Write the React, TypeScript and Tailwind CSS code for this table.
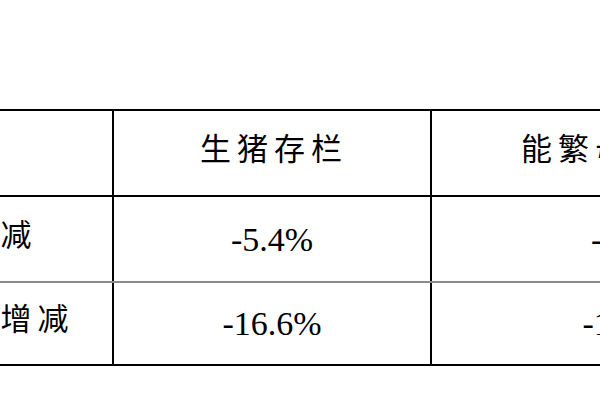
import React from "react";

const cjk = "font-['Noto_Sans_CJK_SC',sans-serif] text-[31px] tracking-[6px] pb-[12px]";
const num = "font-['Liberation_Serif',serif] text-[34px]";

const rows = [
  { label: "比上月增减", pig: "-5.4%", sow: "-4.5%", line: "border-b-2 border-[#8a8a8a]" },
  { label: "比上年同期增减", pig: "-16.6%", sow: "-13.2%", line: "border-b-2 border-black" },
];

export default function App() {
  return (
    <div className="w-[600px] h-[400px] overflow-hidden bg-white text-black">
      <div className="pt-[109px] -ml-[222px] w-[1054px]">
        <div className="border-t-2 border-black">
          <div className="grid grid-cols-[336px_318px_400px] h-[86px] border-b-2 border-black">
            <div className="border-r-2 border-black" />
            <div className={`border-r-2 border-black flex items-center justify-center pl-[4px] ${cjk}`}>生猪存栏</div>
            <div className={`flex items-center justify-center ${cjk}`}>能繁母猪存栏</div>
          </div>
          {rows.map((r, i) => (
            <div
              key={r.label}
              className={`grid grid-cols-[336px_318px_400px] ${i === 0 ? "h-[86px]" : "h-[83px]"} ${r.line}`}
            >
              <div className={`border-r-2 border-black flex items-center justify-center whitespace-nowrap ${cjk}`}>
                {r.label}
              </div>
              <div className={`border-r-2 border-black flex items-center justify-center ${num}`}>{r.pig}</div>
              <div className={`flex items-center justify-center ${num}`}>{r.sow}</div>
            </div>
          ))}
        </div>
      </div>
    </div>
  );
}
